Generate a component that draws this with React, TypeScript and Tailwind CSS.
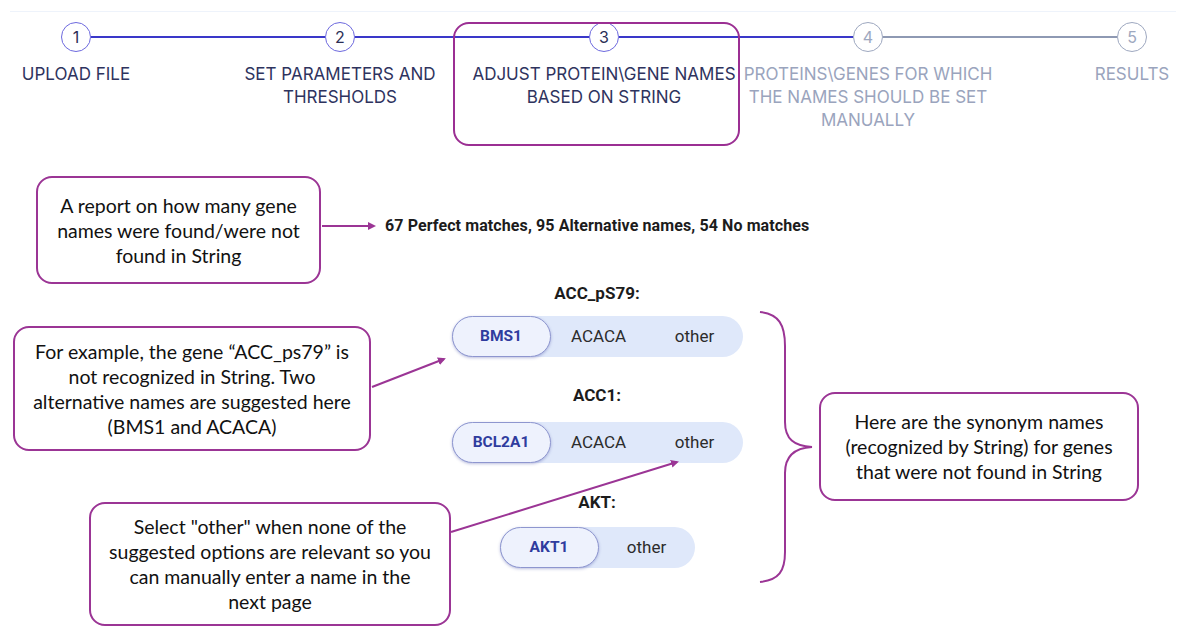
import React from 'react';

// --- stepper data ---
const steps = [
  { n: 1, label: ['UPLOAD FILE'], done: true },
  { n: 2, label: ['SET PARAMETERS AND', 'THRESHOLDS'], done: true },
  { n: 3, label: ['ADJUST PROTEIN\\GENE NAMES', 'BASED ON STRING'], done: true },
  { n: 4, label: ['PROTEINS\\GENES FOR WHICH', 'THE NAMES SHOULD BE SET', 'MANUALLY'], done: false },
  { n: 5, label: ['RESULTS'], done: false },
];

const genes = [
  { name: 'ACC_pS79:', picked: 'BMS1', rest: ['ACACA', 'other'], mt: 'mt-[47px]', gap: 'mt-[13px]' },
  { name: 'ACC1:', picked: 'BCL2A1', rest: ['ACACA', 'other'], mt: 'mt-[28px]', gap: 'mt-[17px]' },
  { name: 'AKT:', picked: 'AKT1', rest: ['other'], mt: 'mt-[29px]', gap: 'mt-[15px]' },
];

function Stepper() {
  return (
    <div className="relative pb-[8px]">
      <div className="mt-[11px] mx-[10px] h-px bg-[#eef3fb]" />
      <div className="flex -ml-[56px] mt-[10px]">
        {steps.map((s, i) => (
          <div key={s.n} className="relative w-[264px] shrink-0 flex flex-col items-center">
            {i < steps.length - 1 && (
              <div
                className={`absolute top-[14px] left-[calc(50%+15px)] w-[234px] h-[2px] ${
                  s.n < 4 ? 'bg-[#3a38c9]' : 'bg-[#8e99b3]'
                }`}
              />
            )}
            <div
              className={`w-[30px] h-[30px] rounded-full border-[1.5px] flex items-center justify-center text-[16px] ${
                s.done ? 'border-[#6d69de] text-[#2b2e56]' : 'border-[#9ea8c0] text-[#9ea8c0]'
              }`}
            >
              {s.n}
            </div>
            <div
              className={`mt-[11px] text-center text-[17px] leading-[23px] whitespace-nowrap ${
                s.done ? 'text-[#2e335e]' : 'text-[#9aa4bd]'
              }`}
            >
              {s.label.map((l) => (
                <div key={l}>{l}</div>
              ))}
            </div>
          </div>
        ))}
      </div>
      {/* highlight around the current step */}
      <div className="absolute left-[453px] top-[11px] w-[287px] h-[124px] rounded-[16px] border-2 border-[#9b2f93]" />
    </div>
  );
}

function Callout({ className, children }: { className: string; children: React.ReactNode }) {
  return (
    <div
      className={`absolute flex items-center justify-center text-center rounded-[16px] border-2 border-[#9b3595] bg-white text-[19.5px] leading-[25px] text-[#111] font-['Lato',sans-serif] ${className}`}
    >
      <div>{children}</div>
    </div>
  );
}

function GenePicker() {
  return (
    <div className="ml-[451px] w-[292px] flex flex-col items-center font-['Roboto',sans-serif]">
      {genes.map((g) => (
        <React.Fragment key={g.name}>
          <div className={`${g.mt} text-[17px] leading-[20px] font-bold text-[#1c1c1c]`}>{g.name}</div>
          <div className={`${g.gap} flex h-[41px] rounded-full bg-[#dfe8fa]`}>
            <div className="w-[99px] h-full rounded-full border-[1.5px] border-[#8e96cf] bg-[#eef2fd] shadow-[0_1px_3px_rgba(60,70,160,0.35)] flex items-center justify-center text-[15.5px] font-bold text-[#2f3c9e]">
              {g.picked}
            </div>
            {g.rest.map((r) => (
              <div key={r} className="w-[96px] h-full flex items-center justify-center text-[17px] text-[#2c2c2c]">
                {r}
              </div>
            ))}
          </div>
        </React.Fragment>
      ))}
    </div>
  );
}

export default function App() {
  return (
    <div className="relative w-[1186px] h-[631px] overflow-hidden bg-white font-['Inter',sans-serif]">
      <Stepper />

      <div className="relative">
        <p className="pt-[76px] pl-[385px] text-[16px] leading-[20px] font-bold tracking-[0.1px] text-[#1c1c1c] font-['Roboto',sans-serif]">
          67 Perfect matches, 95 Alternative names, 54 No matches
        </p>
        <GenePicker />
      </div>

      {/* annotations */}
      <svg className="absolute inset-0 pointer-events-none" width="1186" height="631">
        <defs>
          <marker id="tip" markerWidth="8" markerHeight="8" refX="6" refY="4" orient="auto" markerUnits="userSpaceOnUse">
            <path d="M0,0 L8,4 L0,8 z" fill="#9b3595" />
          </marker>
        </defs>
        <g stroke="#9b3595" strokeWidth="2" fill="none">
          <line x1="322" y1="226" x2="374" y2="226" markerEnd="url(#tip)" />
          <line x1="372" y1="387" x2="444" y2="359" markerEnd="url(#tip)" />
          <line x1="451" y1="532" x2="677" y2="462" markerEnd="url(#tip)" />
          <path d="M760,312 C779,314 785,325 785,346 L785,422 C785,439 794,446 812,447 C794,448 785,456 785,473 L785,552 C785,571 779,580 760,582" />
        </g>
      </svg>

      <Callout className="left-[36px] top-[176px] w-[285px] h-[108px]">
        A report on how many gene
        <br />
        names were found/were not
        <br />
        found in String
      </Callout>
      <Callout className="left-[13px] top-[326px] w-[358px] h-[125px]">
        For example, the gene “ACC_ps79” is
        <br />
        not recognized in String. Two
        <br />
        alternative names are suggested here
        <br />
        (BMS1 and ACACA)
      </Callout>
      <Callout className="left-[89px] top-[502px] w-[362px] h-[124px]">
        Select "other" when none of the
        <br />
        suggested options are relevant so you
        <br />
        can manually enter a name in the
        <br />
        next page
      </Callout>
      <Callout className="left-[819px] top-[392px] w-[320px] h-[109px]">
        Here are the synonym names
        <br />
        (recognized by String) for genes
        <br />
        that were not found in String
      </Callout>
    </div>
  );
}
